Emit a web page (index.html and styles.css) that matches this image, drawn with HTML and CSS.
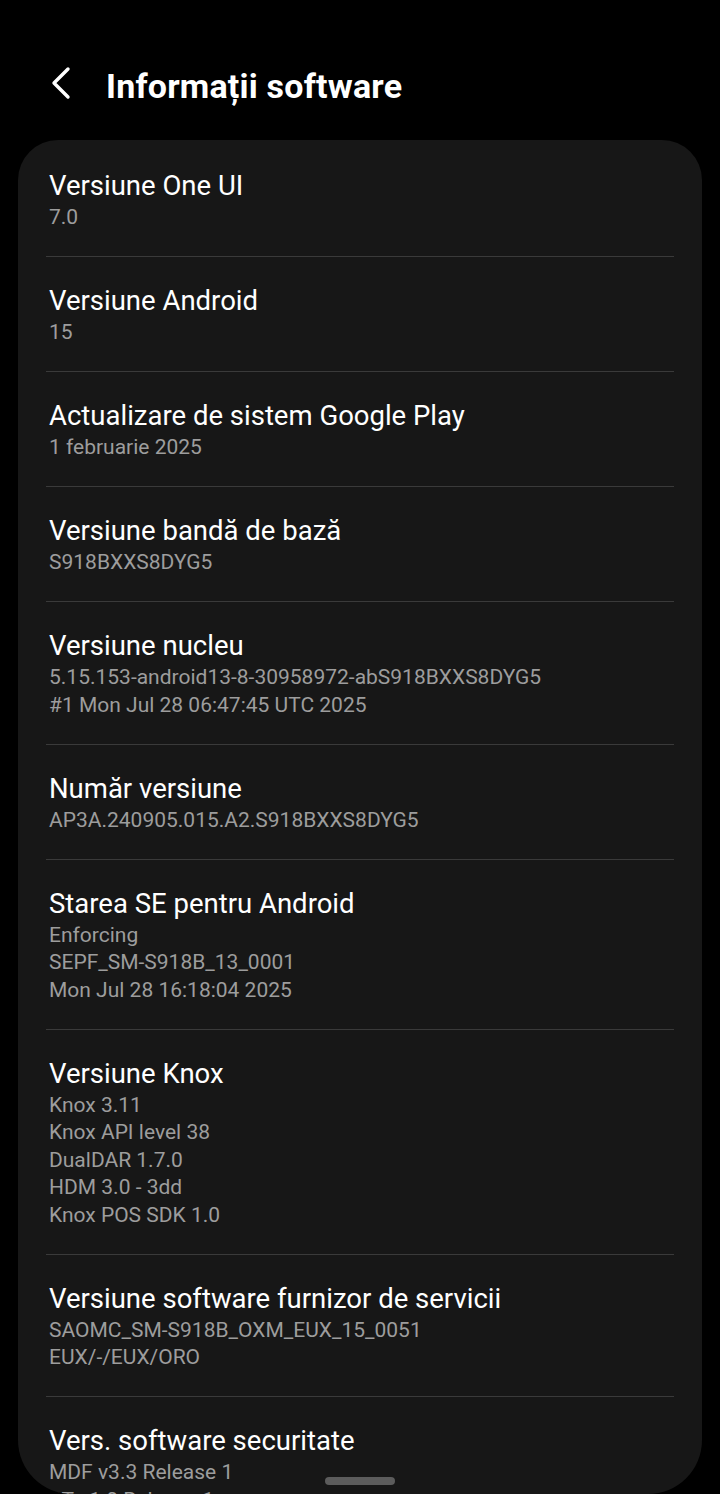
FILE: index.html
```html
<html>
	<head>
		<title>Informații software</title>
		<meta charset="utf-8">
		<link rel="stylesheet" href="styles.css">
	</head>
	<body>
		<div class="topbar">
			<svg class="back" width="24" height="34" viewBox="0 0 24 34">
				<path d="M18 3 L4 17 L18 31" fill="none" stroke="#fff" stroke-width="3.4" stroke-linecap="round" stroke-linejoin="round"/>
			</svg>
			<h1>Informații software</h1>
		</div>

		<div class="card">
			<div class="row">
				<div class="label">Versiune One UI</div>
				<div class="value">7.0</div>
			</div>
			<div class="row">
				<div class="label">Versiune Android</div>
				<div class="value">15</div>
			</div>
			<div class="row">
				<div class="label">Actualizare de sistem Google Play</div>
				<div class="value">1 februarie 2025</div>
			</div>
			<div class="row">
				<div class="label">Versiune bandă de bază</div>
				<div class="value">S918BXXS8DYG5</div>
			</div>
			<div class="row">
				<div class="label">Versiune nucleu</div>
				<div class="value">5.15.153-android13-8-30958972-abS918BXXS8DYG5</div>
				<div class="value">#1 Mon Jul 28 06:47:45 UTC 2025</div>
			</div>
			<div class="row">
				<div class="label">Număr versiune</div>
				<div class="value">AP3A.240905.015.A2.S918BXXS8DYG5</div>
			</div>
			<div class="row">
				<div class="label">Starea SE pentru Android</div>
				<div class="value">Enforcing</div>
				<div class="value">SEPF_SM-S918B_13_0001</div>
				<div class="value">Mon Jul 28 16:18:04 2025</div>
			</div>
			<div class="row">
				<div class="label">Versiune Knox</div>
				<div class="value">Knox 3.11</div>
				<div class="value">Knox API level 38</div>
				<div class="value">DualDAR 1.7.0</div>
				<div class="value">HDM 3.0 - 3dd</div>
				<div class="value">Knox POS SDK 1.0</div>
			</div>
			<div class="row">
				<div class="label">Versiune software furnizor de servicii</div>
				<div class="value">SAOMC_SM-S918B_OXM_EUX_15_0051</div>
				<div class="value">EUX/-/EUX/ORO</div>
			</div>
			<div class="row">
				<div class="label">Vers. software securitate</div>
				<div class="value">MDF v3.3 Release 1</div>
				<div class="value">STz 1.0 Release 1</div>
			</div>
		</div>

		<div class="handle"></div>
	</body>
</html>
```

FILE: styles.css
```css
/* Dark settings screen */
body {
  margin: 0;
  height: 1494px;
  overflow: hidden;
  background-color: #000;
  color: #fff;
  font-family: Roboto, "Noto Sans", sans-serif;
}

/* Header with back arrow */
.topbar {
  display: flex;
  align-items: flex-start;
  height: 140px;
  padding: 66px 0 0 50px;
  box-sizing: border-box;
}

.back {
  margin-right: 32px;
}

.topbar h1 {
  margin: 0;
  font-size: 34px;
  font-weight: 700;
  line-height: 40px;
  letter-spacing: 0.2px;
}

/* Rounded list card */
.card {
  background-color: #171717;
  margin: 0 18px;
  padding: 2px 28px 0;
  height: 1354px;
  box-sizing: border-box;
  overflow: hidden;
  border-radius: 40px 40px 54px 54px;
}

.row {
  padding: 26px 3px 24.5px;
  border-top: 1px solid #3a3a3a;
}

.row:first-child {
  border-top: none;
}

.label {
  font-size: 27.5px;
  line-height: 36px;
}

.value {
  font-size: 21px;
  line-height: 27.5px;
  color: #9d9d9d;
}

/* Gesture bar */
.handle {
  position: absolute;
  left: 325px;
  top: 1477px;
  width: 70px;
  height: 8px;
  border-radius: 4px;
  background-color: #5c5c5c;
}
```
